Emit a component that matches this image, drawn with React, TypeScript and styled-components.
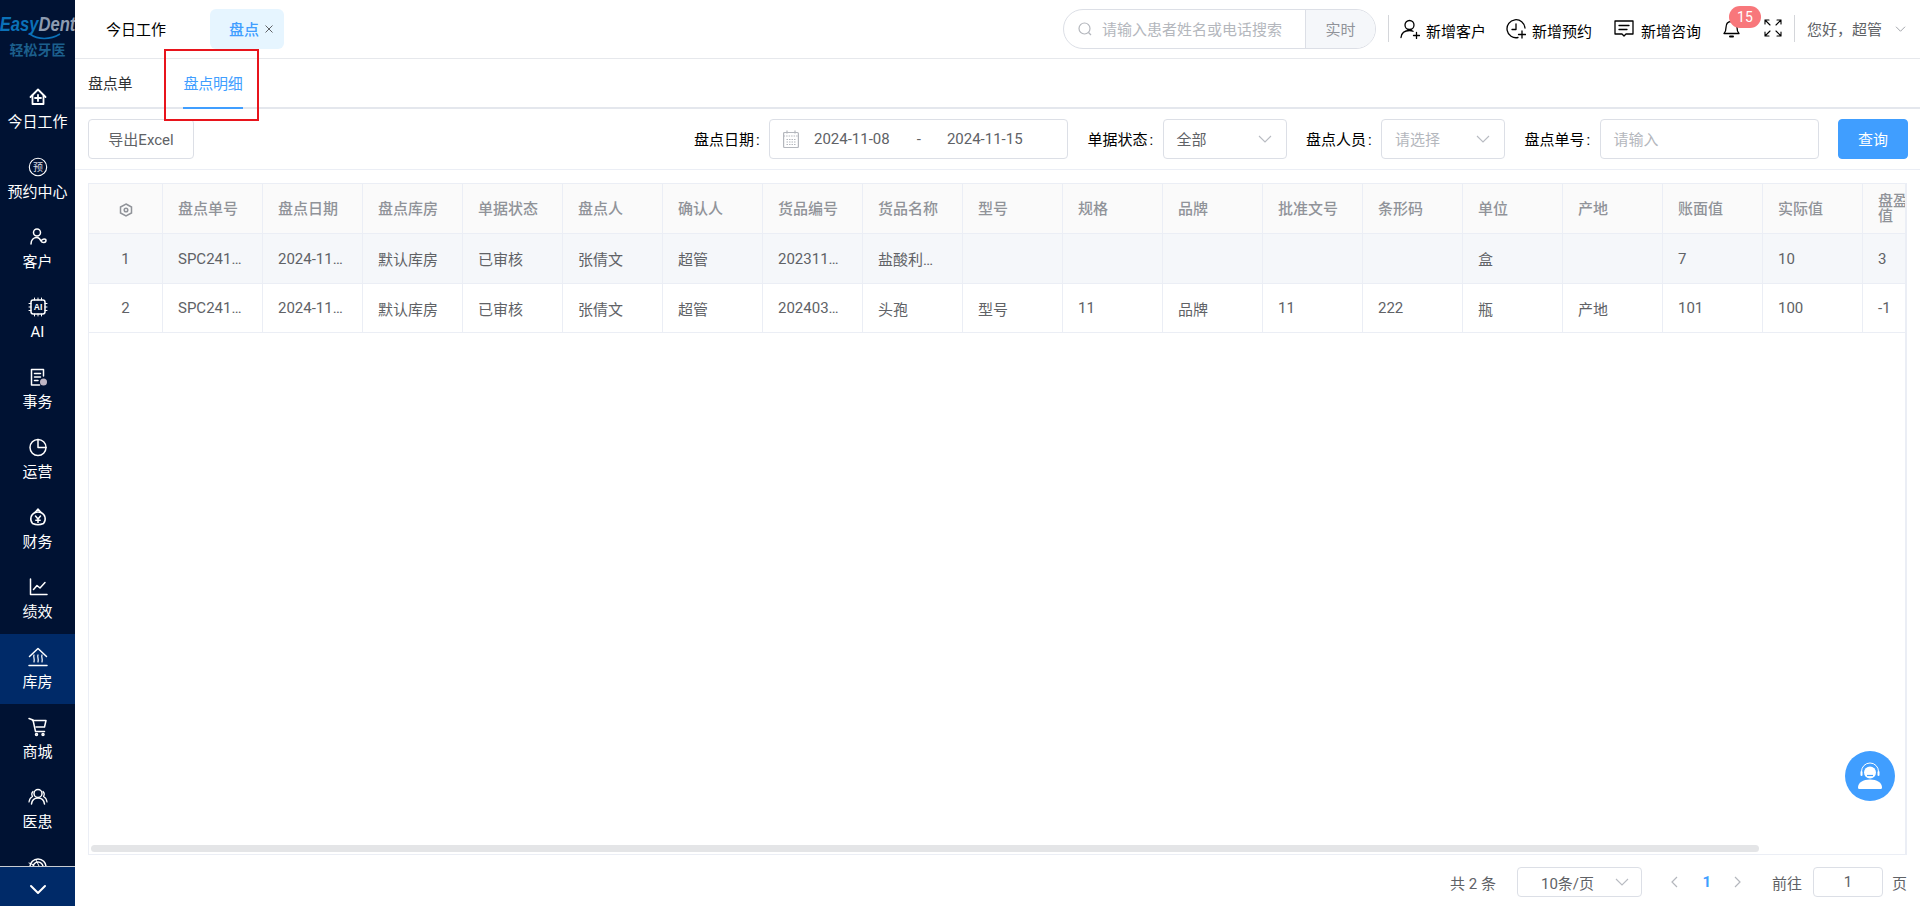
import React from "react";
import styled, { createGlobalStyle } from "styled-components";

const Global = createGlobalStyle`
  html, body { margin: 0; padding: 0; height: 100%; background: #fff; }
  #root { height: 100%; }
  * { box-sizing: border-box; }
  body { font-family: Roboto, "Noto Sans CJK SC", sans-serif; font-size: 15px; overflow: hidden; }
`;

const Page = styled.div`
  position: relative;
  display: flex;
  width: 1920px;
  height: 906px;
  overflow: hidden;
`;

const Sidebar = styled.aside`
  flex: 0 0 75px;
  width: 75px;
  min-width: 0;
  overflow: hidden;
  display: flex;
  flex-direction: column;
  background: #001233;
  color: #fff;
  height: 100%;
`;

const Logo = styled.div`
  flex: 0 0 74px;
  width: 75px;
  display: flex;
  flex-direction: column;
  align-items: center;
  padding-top: 12px;
  overflow: hidden;
`;

const Brand = styled.div`
  width: 75px;
  display: flex;
  justify-content: center;
  font-family: "Liberation Sans", sans-serif;
  font-style: italic;
  font-weight: 700;
  font-size: 20px;
  line-height: 24px;
  white-space: nowrap;
  transform: scaleX(0.83);
  color: #8d9bb0;
`;

const BrandBlue = styled.span`
  color: #0b71b8;
`;

const Smile = styled.svg`
  display: block;
  margin: -3px 0 0 14px;
`;

const BrandSub = styled.div`
  font-size: 14px;
  line-height: 18px;
  margin-top: 1px;
  color: #1c5f8c;
  font-weight: 700;
  white-space: nowrap;
`;

const Nav = styled.nav`
  flex: 1;
  min-height: 0;
  overflow: hidden;
`;

const NavItem = styled.div<{ $active?: boolean }>`
  height: 70px;
  display: flex;
  flex-direction: column;
  align-items: center;
  padding-top: 13px;
  background: ${(p) => (p.$active ? "#002a68" : "transparent")};
`;

const NavIcon = styled.svg`
  display: block;
  width: 20px;
  height: 20px;
  fill: none;
  stroke: #fff;
  stroke-width: 1.5;
  stroke-linecap: round;
  stroke-linejoin: round;
`;

const NavLabel = styled.div`
  margin-top: 4px;
  font-size: 15px;
  line-height: 22px;
  white-space: nowrap;
`;

const Collapse = styled.div`
  flex: 0 0 40px;
  display: flex;
  align-items: center;
  justify-content: center;
  padding-top: 6px;
  background: #002a68;
  border-top: 1px solid #c8ccd2;
`;

const Main = styled.main`
  flex: 1;
  min-width: 0;
  display: flex;
  flex-direction: column;
`;

const TopBar = styled.header`
  flex: 0 0 59px;
  display: flex;
  align-items: center;
  padding: 0 14px 1px 31px;
  border-bottom: 1px solid #e6e8ec;
`;

const TabStrip = styled.div`
  display: flex;
  align-items: center;
  gap: 44px;
`;

const HomeTab = styled.div`
  color: #000;
  font-size: 15px;
`;

const OpenTab = styled.div`
  display: flex;
  align-items: center;
  height: 40px;
  padding: 0 11px 0 19px;
  gap: 6px;
  border-radius: 6px;
  background: #e6f5ff;
  color: #409eff;
  font-size: 15px;
  font-weight: 500;
`;

const TopRight = styled.div`
  margin-left: auto;
  display: flex;
  align-items: center;
`;

const SearchBox = styled.div`
  width: 313px;
  height: 40px;
  display: flex;
  align-items: stretch;
  border: 1px solid #dcdfe6;
  border-radius: 20px;
  overflow: hidden;
`;

const SearchInput = styled.div`
  flex: 1;
  display: flex;
  align-items: center;
  padding-left: 14px;
  gap: 10px;
  color: #b4b7bd;
  font-size: 15px;
  white-space: nowrap;
`;

const SearchMode = styled.div`
  flex: 0 0 70px;
  display: flex;
  align-items: center;
  justify-content: center;
  background: #f5f7fa;
  border-left: 1px solid #dcdfe6;
  color: #909399;
  font-size: 15px;
`;

const Divider = styled.div<{ $l: number; $r: number }>`
  width: 1px;
  height: 27px;
  margin: 0 ${(p) => p.$r}px 0 ${(p) => p.$l}px;
  background: #d4d6da;
`;

const Action = styled.div<{ $ml?: number; $gap?: number }>`
  display: flex;
  align-items: center;
  gap: ${(p) => p.$gap ?? 6}px;
  margin-left: ${(p) => p.$ml ?? 0}px;
  color: #000;
  font-size: 15px;
  white-space: nowrap;
`;

const ActionText = styled.span`
  padding-top: 3px;
`;

const BlackIcon = styled.svg`
  display: block;
  fill: none;
  stroke: #000;
  stroke-width: 1.3;
  stroke-linecap: round;
  stroke-linejoin: round;
`;

const Bell = styled.div`
  position: relative;
  width: 19px;
  height: 20px;
  margin: -1px 0 0 21px;
`;

const Badge = styled.span`
  position: absolute;
  left: 7px;
  top: -12px;
  width: 32px;
  height: 22px;
  border-radius: 11px;
  background: #f8777b;
  color: #fff;
  font-size: 14px;
  line-height: 22px;
  text-align: center;
`;

const FullScreen = styled(BlackIcon)`
  margin: -2px 0 0 23px;
  stroke-width: 1.1;
`;

const Greeting = styled.span`
  color: #606266;
  font-size: 15px;
  margin-right: 13px;
  white-space: nowrap;
`;

const SubTabs = styled.div`
  flex: 0 0 50px;
  display: flex;
  padding-left: 13px;
  gap: 51px;
  border-bottom: 2px solid #e4e7ed;
`;

const SubTab = styled.div<{ $active?: boolean }>`
  height: 50px;
  margin-bottom: -2px;
  line-height: 51px;
  font-size: 15px;
  letter-spacing: -0.2px;
  color: ${(p) => (p.$active ? "#409eff" : "#303133")};
  border-bottom: 2px solid ${(p) => (p.$active ? "#409eff" : "transparent")};
`;

const FilterBar = styled.div`
  flex: 0 0 61px;
  display: flex;
  align-items: center;
  justify-content: space-between;
  padding: 0 12px 1px 13px;
  border-bottom: 1px solid #ebeef5;
`;

const Button = styled.div<{ $primary?: boolean }>`
  height: 40px;
  width: ${(p) => (p.$primary ? 70 : 106)}px;
  display: flex;
  align-items: center;
  justify-content: center;
  font-size: 15px;
  border-radius: 4px;
  color: ${(p) => (p.$primary ? "#fff" : "#606266")};
  background: ${(p) => (p.$primary ? "#409eff" : "#fff")};
  border: 1px solid ${(p) => (p.$primary ? "#409eff" : "#dcdfe6")};
`;

const Filters = styled.div`
  display: flex;
  align-items: center;
  gap: 19.5px;
`;

const Field = styled.div`
  display: flex;
  align-items: center;
  gap: 9px;
`;

const Label = styled.span`
  width: 66px;
  color: #000;
  font-size: 15px;
  white-space: nowrap;
`;

const Colon = styled.span`
  margin-left: 2px;
`;

const Box = styled.div<{ $w: number }>`
  width: ${(p) => p.$w}px;
  height: 40px;
  display: flex;
  align-items: center;
  padding: 0 14px 0 13px;
  border: 1px solid #dcdfe6;
  border-radius: 4px;
  font-size: 15px;
  color: #606266;
  background: #fff;
`;

const Placeholder = styled.span`
  color: #b4b7bd;
`;

const BoxChevron = styled.svg<{ $stroke?: string }>`
  margin-left: auto;
  display: block;
  fill: none;
  stroke: ${(p) => p.$stroke ?? "#b8bbc2"};
  stroke-width: 1.1;
`;

const DateValue = styled.span<{ $ml: number }>`
  margin-left: ${(p) => p.$ml}px;
  white-space: nowrap;
`;

const GrayIcon = styled.svg`
  display: block;
  flex: none;
  fill: none;
  stroke: #b4b7bd;
  stroke-width: 1.2;
`;

const TableArea = styled.div`
  position: relative;
  flex: 1;
  min-height: 0;
  margin: 13px 13px 0 13px;
  border: 1px solid #ebeef5;
  border-right-width: 2px;
  overflow: hidden;
`;

const DataTable = styled.table`
  table-layout: fixed;
  border-collapse: separate;
  border-spacing: 0;
  width: 1823px;
`;

const Th = styled.th<{ $center?: boolean; $last?: boolean }>`
  height: 50px;
  padding: 1px ${(p) => (p.$center || p.$last ? 0 : 15)}px 0 ${(p) => (p.$center ? 0 : 15)}px;
  background: #fafafa;
  color: #909399;
  font-size: 15px;
  line-height: 15px;
  font-weight: 500;
  text-align: ${(p) => (p.$center ? "center" : "left")};
  border-right: 1px solid #ebeef5;
  border-bottom: 1px solid #ebeef5;
`;

const Td = styled.td<{ $center?: boolean; $last?: boolean; $hover?: boolean }>`
  height: ${(p) => (p.$hover ? 50 : 49)}px;
  padding: 0 ${(p) => (p.$center || p.$last ? 0 : 17)}px 0 ${(p) => (p.$center ? 0 : 15)}px;
  background: ${(p) => (p.$hover ? "#f5f7fa" : "#fff")};
  color: #606266;
  font-size: 15px;
  text-align: ${(p) => (p.$center ? "center" : "left")};
  border-right: 1px solid #ebeef5;
  border-bottom: 1px solid #ebeef5;
  white-space: nowrap;
  overflow: hidden;
  text-overflow: ellipsis;
`;

const GearHead = styled.svg`
  display: inline-block;
  vertical-align: middle;
`;

const ScrollThumb = styled.div`
  position: absolute;
  left: 2px;
  bottom: 2px;
  width: 1668px;
  height: 7px;
  border-radius: 4px;
  background: #e4e5e7;
`;

const Pager = styled.footer`
  flex: 0 0 51px;
  display: flex;
  align-items: center;
  justify-content: flex-end;
  padding: 3px 13px 0 0;
  color: #606266;
  font-size: 15px;
`;

const PageSize = styled.div`
  width: 125px;
  height: 30px;
  margin-left: 21px;
  display: flex;
  align-items: center;
  padding: 0 12px 0 23px;
  border: 1px solid #dcdfe6;
  border-radius: 4px;
  white-space: nowrap;
`;

const PageNums = styled.div`
  display: flex;
  align-items: center;
  margin-left: 29px;
  gap: 24.5px;
`;

const PageCurrent = styled.span`
  color: #409eff;
  font-weight: 700;
  width: 7px;
  text-align: center;
`;

const Goto = styled.span`
  margin-left: 31px;
`;

const PageInput = styled.div`
  width: 70px;
  height: 30px;
  margin: 0 9px 0 11px;
  display: flex;
  align-items: center;
  justify-content: center;
  border: 1px solid #dcdfe6;
  border-radius: 4px;
`;

const Help = styled.div`
  position: absolute;
  left: 1845px;
  top: 751px;
  width: 50px;
  height: 50px;
  border-radius: 50%;
  background: #409eff;
  display: flex;
  align-items: center;
  justify-content: center;
`;

const Highlight = styled.div`
  position: absolute;
  left: 164px;
  top: 49px;
  width: 95px;
  height: 72px;
  border: 2px solid #e8141c;
  pointer-events: none;
`;

const Chevron = ({ w = 14, h = 8, stroke }: { w?: number; h?: number; stroke?: string }) => (
  <BoxChevron width={w} height={h} viewBox="0 0 14 8" $stroke={stroke}>
    <path d="M1 1l6 6 6-6" />
  </BoxChevron>
);

const navItems: { label: string; icon: React.ReactNode; active?: boolean }[] = [
  {
    label: "今日工作",
    icon: (
      <>
        <path d="M2.5 10L10 2.5 17.5 10" strokeWidth="1.8" />
        <path d="M4.5 8.5V17h11V8.5" strokeWidth="1.8" />
        <path d="M10 8v6M7 11h6" strokeWidth="1.8" />
      </>
    ),
  },
  {
    label: "预约中心",
    icon: (
      <>
        <circle cx="10" cy="10" r="8.7" strokeWidth="1.1" />
        <text x="10" y="13.5" fontSize="10" textAnchor="middle" fill="#d8dce4" stroke="none">预</text>
      </>
    ),
  },
  {
    label: "客户",
    icon: (
      <>
        <circle cx="9" cy="5.5" r="3.5" />
        <path d="M3 17c0-4 2.500-6.500 6-6.500 2 0 3 1.500 4 3.500 1 2 5 2 5-.5 0-2-3.500-2.500-5 .5" />
      </>
    ),
  },
  {
    label: "AI",
    icon: (
      <>
        <rect x="3" y="3" width="14" height="14" rx="2.200" />
        <path d="M6.500 1v2M10 1v2M13.500 1v2M6.500 17v2M10 17v2M13.500 17v2M1 6.500h2M1 10h2M1 13.500h2M17 6.500h2M17 10h2M17 13.500h2" strokeWidth="1" />
        <text x="10" y="13" fontSize="8.500" fontWeight="700" textAnchor="middle" fill="#fff" stroke="none" fontFamily="Liberation Sans">AI</text>
      </>
    ),
  },
  {
    label: "事务",
    icon: (
      <>
        <path d="M15.500 9V2.500H3.500V18h8" />
        <path d="M6.500 6.500h6M6.500 10h6M6.500 13.500h3.500" />
        <circle cx="15.500" cy="15" r="3.500" fill="#c0b6c4" stroke="none" />
      </>
    ),
  },
  {
    label: "运营",
    icon: (
      <>
        <circle cx="10" cy="10.500" r="8" />
        <path d="M10 2.500v8h8" />
      </>
    ),
  },
  {
    label: "财务",
    icon: (
      <>
        <path d="M7 5.500L10 2l3 3.500" />
        <path d="M4.500 16.500A7 7 0 0 1 7 5.500c2-.8 4-.8 6 0a7 7 0 0 1 2.500 11c-3 1.300-8 1.300-11 0z" />
        <path d="M7.500 9l2.500 3 2.500-3M10 12v3.500M7.800 13.200h4.400" />
      </>
    ),
  },
  {
    label: "绩效",
    icon: (
      <>
        <path d="M2.500 2v15.500H19" />
        <path d="M5.500 12.500L9 8.500l3 2.500 5-5.500" />
      </>
    ),
  },
  {
    label: "库房",
    active: true,
    icon: (
      <>
        <path d="M1.500 9.500L10 1.500l8.500 8" />
        <path d="M1 18.500h18" />
        <path d="M6 8c-1 2 1 3.500 0 7M10 8c-1 2 1 3.500 0 7M14 8c-1 2 1 3.500 0 7" strokeWidth="1.200" />
      </>
    ),
  },
  {
    label: "商城",
    icon: (
      <>
        <path d="M1 1.500l4 1.500 2.500 11.500h9" />
        <path d="M4.500 3.500H18l-1.500 6.500H8" />
        <circle cx="8.500" cy="17.500" r="1" />
        <circle cx="15" cy="17.500" r="1" />
      </>
    ),
  },
  {
    label: "医患",
    icon: (
      <>
        <circle cx="10" cy="6.500" r="4" />
        <path d="M3.500 17c.5-4 3-6 6.500-6s6 2 6.500 6" />
        <path d="M1 15c.3-2.500 1.500-4.500 3.500-5.500-1-1.500-1-3.500 .5-5M19 15c-.3-2.500-1.500-4.500-3.500-5.500 1-1.500 1-3.500-.5-5" strokeWidth="1.200" />
      </>
    ),
  },
  {
    label: "",
    icon: (
      <>
        <path d="M2 10a8 8 0 0 1 16 0M5 10a5 5 0 0 1 10 0" />
        <path d="M1 6l5 2M8 3l3 6" strokeWidth="1" />
      </>
    ),
  },
];

const headers = [
  "盘点单号", "盘点日期", "盘点库房", "单据状态", "盘点人", "确认人", "货品编号", "货品名称",
  "型号", "规格", "品牌", "批准文号", "条形码", "单位", "产地", "账面值", "实际值",
];

const rows = [
  ["1", "SPC24110800001", "2024-11-08", "默认库房", "已审核", "张倩文", "超管", "20231108001", "盐酸利多卡因", "", "", "", "", "", "盒", "", "7", "10", "3"],
  ["2", "SPC24110800001", "2024-11-08", "默认库房", "已审核", "张倩文", "超管", "20240301001", "头孢", "型号", "11", "品牌", "11", "222", "瓶", "产地", "101", "100", "-1"],
];

const FieldLabel = ({ text }: { text: string }) => (
  <Label>
    {text}
    <Colon>:</Colon>
  </Label>
);

export default function App() {
  return (
    <Page>
      <Global />
      <Sidebar>
        <Logo>
          <Brand>
            <BrandBlue>Easy</BrandBlue>Dent
          </Brand>
          <Smile width="32" height="7" viewBox="0 0 32 7" fill="none">
            <path d="M1 1c8 6 20 6 30 0" stroke="#0b71b8" strokeWidth="1.600" />
          </Smile>
          <BrandSub>轻松牙医</BrandSub>
        </Logo>
        <Nav>
          {navItems.map((n, i) => (
            <NavItem key={i} $active={n.active}>
              <NavIcon viewBox="0 0 20 20">{n.icon}</NavIcon>
              {n.label && <NavLabel>{n.label}</NavLabel>}
            </NavItem>
          ))}
        </Nav>
        <Collapse>
          <svg width="18" height="11" viewBox="0 0 18 11" fill="none" stroke="#fff" strokeWidth="2" strokeLinecap="round" strokeLinejoin="round">
            <path d="M2 2l7 7 7-7" />
          </svg>
        </Collapse>
      </Sidebar>
      <Main>
        <TopBar>
          <TabStrip>
            <HomeTab>今日工作</HomeTab>
            <OpenTab>
              盘点
              <svg width="8" height="8" viewBox="0 0 8 8" fill="none" stroke="#606266" strokeWidth="1">
                <path d="M.5.500l7 7M7.500.500l-7 7" />
              </svg>
            </OpenTab>
          </TabStrip>
          <TopRight>
            <SearchBox>
              <SearchInput>
                <GrayIcon width="14" height="14" viewBox="0 0 14 14">
                  <circle cx="6.500" cy="6.500" r="5.500" />
                  <path d="M10.500 10.500l2.500 2.500" />
                </GrayIcon>
                请输入患者姓名或电话搜索
              </SearchInput>
              <SearchMode>实时</SearchMode>
            </SearchBox>
            <Divider $l={12} $r={11} />
            <Action>
              <BlackIcon width="20" height="20" viewBox="0 0 20 20">
                <circle cx="9.500" cy="6" r="4.500" />
                <path d="M1 18.500C1.500 14 4.500 11.500 9.500 11.500c1.500 0 2.500.2 3.500.8" />
                <path d="M13.500 16.500h6M16.500 13.500v6" />
              </BlackIcon>
              <ActionText>新增客户</ActionText>
            </Action>
            <Action $ml={20}>
              <BlackIcon width="20" height="20" viewBox="0 0 20 20">
                <path d="M12 18.500A9 9 0 1 1 19 9" />
                <path d="M10 5v5.500H6" />
                <path d="M12.500 15.500h7M16 12v7" />
              </BlackIcon>
              <ActionText>新增预约</ActionText>
            </Action>
            <Action $ml={22} $gap={7}>
              <BlackIcon width="20" height="20" viewBox="0 0 20 20">
                <path d="M1 2h18v13h-7l-2 2-2-2H1z" />
                <path d="M5 6.500h10M5 10.500h8" />
              </BlackIcon>
              <ActionText>新增咨询</ActionText>
            </Action>
            <Bell>
              <BlackIcon width="19" height="20" viewBox="0 0 19 20">
                <path d="M2 15.500c1.500-1.500 2-2.500 2-6 0-3.500 2-6 5.500-6s5.500 2.500 5.500 6c0 3.500.5 4.500 2 6z" />
                <path d="M8 18.500h3" strokeWidth="2" />
              </BlackIcon>
              <Badge>15</Badge>
            </Bell>
            <FullScreen width="18" height="18" viewBox="0 0 18 18">
              <path d="M1 5V1h4M1 1l5 5M13 1h4v4M17 1l-5 5M1 13v4h4M1 17l5-5M13 17h4v-4M17 17l-5-5" />
            </FullScreen>
            <Divider $l={12} $r={12} />
            <Greeting>您好，超管</Greeting>
            <Chevron w={11} h={6} stroke="#8d9096" />
          </TopRight>
        </TopBar>
        <SubTabs>
          <SubTab>盘点单</SubTab>
          <SubTab $active>盘点明细</SubTab>
        </SubTabs>
        <FilterBar>
          <Button>导出Excel</Button>
          <Filters>
            <Field>
              <FieldLabel text="盘点日期" />
              <Box $w={299}>
                <GrayIcon width="16" height="18" viewBox="0 0 16 18">
                  <rect x=".6" y="2.500" width="14.800" height="15" rx="1" />
                  <path d="M.6 6h14.800M4 .5v3M12 .5v3M3.500 9.500h9M3.500 12h9M3.500 14.500h9" strokeDasharray="1.500 1" />
                </GrayIcon>
                <DateValue $ml={15}>2024-11-08</DateValue>
                <DateValue $ml={27}>-</DateValue>
                <DateValue $ml={26}>2024-11-15</DateValue>
              </Box>
            </Field>
            <Field>
              <FieldLabel text="单据状态" />
              <Box $w={124}>
                全部
                <Chevron />
              </Box>
            </Field>
            <Field>
              <FieldLabel text="盘点人员" />
              <Box $w={124}>
                <Placeholder>请选择</Placeholder>
                <Chevron />
              </Box>
            </Field>
            <Field>
              <FieldLabel text="盘点单号" />
              <Box $w={219}>
                <Placeholder>请输入</Placeholder>
              </Box>
            </Field>
            <Button $primary>查询</Button>
          </Filters>
        </FilterBar>
        <TableArea>
          <DataTable>
            <colgroup>
              <col style={{ width: 74 }} />
              {headers.map((h) => (
                <col key={h} style={{ width: 100 }} />
              ))}
              <col style={{ width: 49 }} />
            </colgroup>
            <thead>
              <tr>
                <Th $center>
                  <GearHead width="14" height="14" viewBox="0 0 14 14" fill="none" stroke="#909399" strokeWidth="1.500">
                    <path d="M7 1l5.500 3v6L7 13l-5.500-3V4z" />
                    <circle cx="7" cy="7" r="1.800" />
                  </GearHead>
                </Th>
                {headers.map((h) => (
                  <Th key={h}>{h}</Th>
                ))}
                <Th $last>盘盈值</Th>
              </tr>
            </thead>
            <tbody>
              {rows.map((r, i) => (
                <tr key={i}>
                  {r.map((c, j) => (
                    <Td key={j} $center={j === 0} $last={j === r.length - 1} $hover={i === 0}>
                      {c}
                    </Td>
                  ))}
                </tr>
              ))}
            </tbody>
          </DataTable>
          <ScrollThumb />
        </TableArea>
        <Pager>
          <span>共 2 条</span>
          <PageSize>
            10条/页
            <Chevron />
          </PageSize>
          <PageNums>
            <GrayIcon width="7" height="12" viewBox="0 0 7 12">
              <path d="M6 1L1 6l5 5" />
            </GrayIcon>
            <PageCurrent>1</PageCurrent>
            <GrayIcon width="7" height="12" viewBox="0 0 7 12">
              <path d="M1 1l5 5-5 5" />
            </GrayIcon>
          </PageNums>
          <Goto>前往</Goto>
          <PageInput>1</PageInput>
          <span>页</span>
        </Pager>
      </Main>
      <Help>
        <svg width="26" height="28" viewBox="0 0 26 28" fill="none">
          <circle cx="13" cy="10.500" r="6" fill="#fff" />
          <path d="M4.500 11V9.500a8.500 8.500 0 0 1 17 0V11" stroke="#fff" strokeWidth="1" />
          <rect x="3.500" y="9" width="2" height="5" rx="1" fill="#fff" />
          <rect x="20.500" y="9" width="2" height="5" rx="1" fill="#fff" />
          <path d="M10 13.500h6" stroke="#409eff" strokeWidth="1.200" />
          <path d="M1 25.500c0-5 5-8 12-8s12 3 12 8c0 1-.8 1.500-1.500 1.500h-21C1.800 27 1 26.500 1 25.500z" fill="#fff" />
        </svg>
      </Help>
      <Highlight />
    </Page>
  );
}
